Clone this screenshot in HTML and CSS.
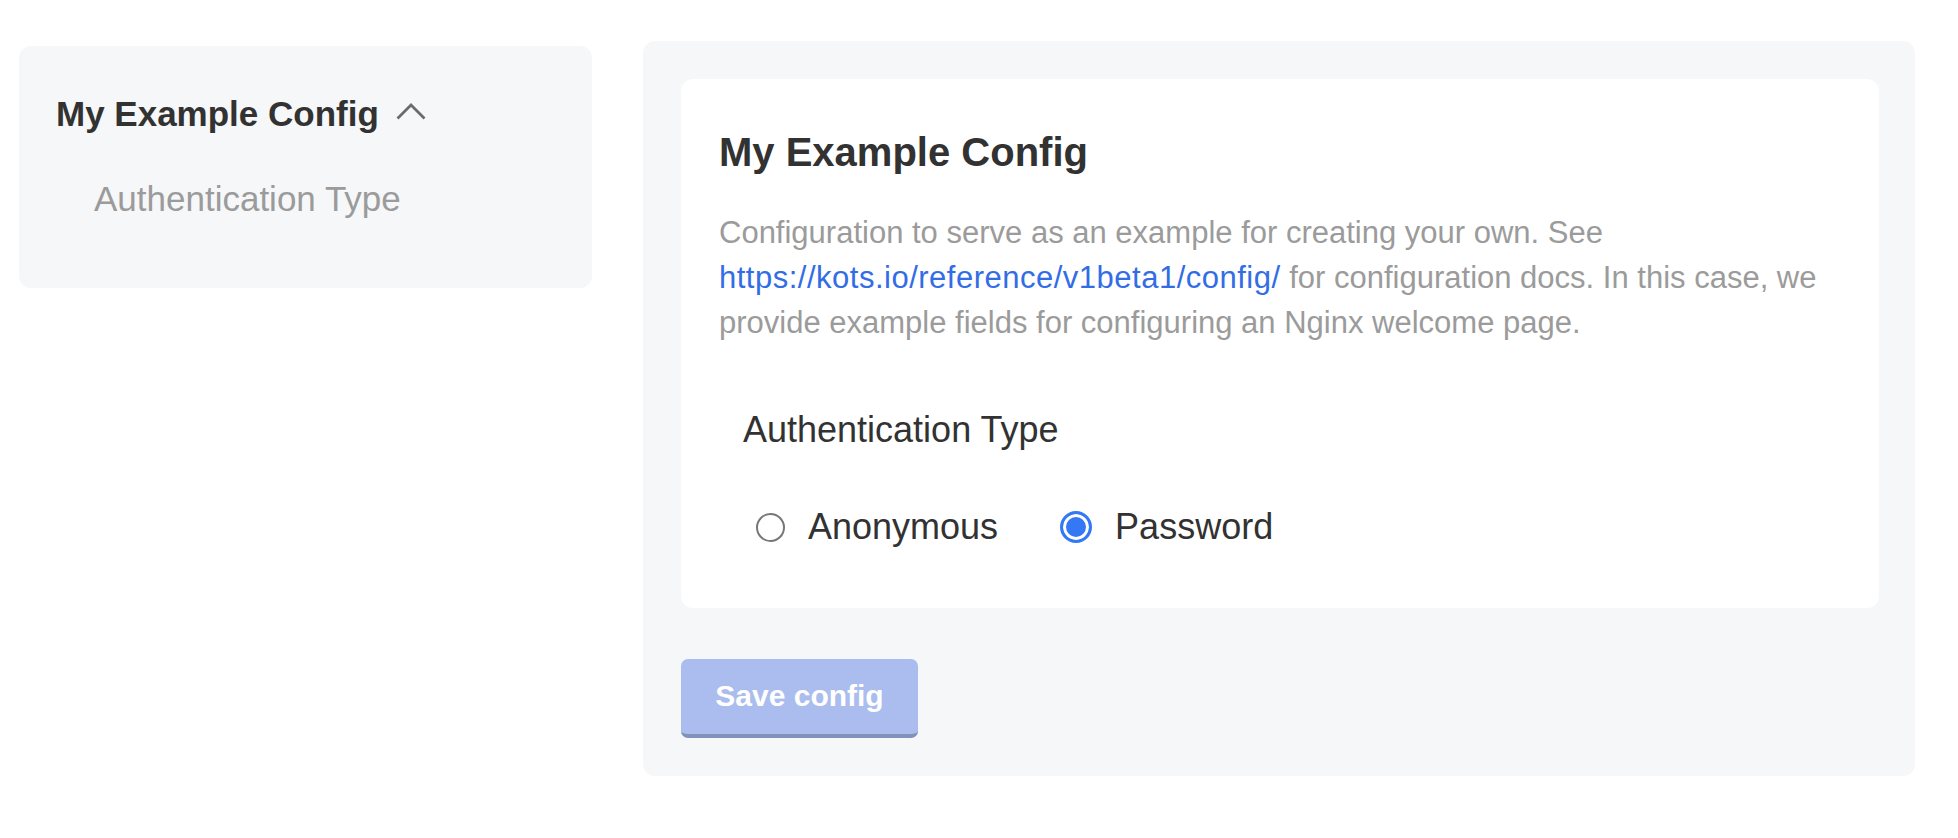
FILE: index.html
```html
<!DOCTYPE html>
<html lang="en">
<head>
<meta charset="utf-8">
<title>Config</title>
<link rel="stylesheet" href="styles.css">
</head>
<body>
<div class="page">
  <aside class="sidebar">
    <div class="side-group">
      <span class="side-title">My Example Config</span>
      <svg class="chevron" width="30" height="17" viewBox="0 0 30 17"><path d="M1.5 15.5 L15 2 L28.5 15.5" fill="none" stroke="#6b6b6b" stroke-width="2.8"/></svg>
    </div>
    <div class="side-item">Authentication Type</div>
  </aside>
  <main class="main">
    <section class="card">
      <h1 class="card-title">My Example Config</h1>
      <p class="desc">Configuration to serve as an example for creating your own. See <a class="link" href="#">https://kots.io/reference/v1beta1/config/</a> for configuration docs. In this case, we provide example fields for configuring an Nginx welcome page.</p>
      <div class="field">
        <div class="field-label">Authentication Type</div>
        <div class="radios">
          <label class="radio-opt"><span class="radio"></span><span>Anonymous</span></label>
          <label class="radio-opt"><span class="radio checked"></span><span>Password</span></label>
        </div>
      </div>
    </section>
    <div class="actions">
      <button class="btn">Save config</button>
    </div>
  </main>
</div>
</body>
</html>
```

FILE: styles.css
```css
html, body {
  margin: 0;
  padding: 0;
  background: #ffffff;
}
body {
  font-family: "Liberation Sans", Arial, Helvetica, sans-serif;
  color: #323232;
}
.page {
  display: flex;
  align-items: flex-start;
  gap: 51px;
  padding: 41px 43px 0 19px;
}
.sidebar {
  width: 573px;
  box-sizing: border-box;
  margin-top: 5px;
  background: #f6f7f9;
  border-radius: 12px;
  padding: 48px 0 69px 37px;
}
.side-group {
  display: flex;
  align-items: center;
  gap: 17px;
  height: 40px;
}
.side-title {
  font-weight: 700;
  font-size: 35px;
  line-height: 40px;
  color: #323232;
}
.chevron {
  display: block;
  margin-top: -6px;
}
.side-item {
  margin-top: 45px;
  padding-left: 38px;
  font-size: 35px;
  line-height: 40px;
  color: #9b9b9b;
}
.main {
  width: 1272px;
  box-sizing: border-box;
  background: #f6f7f9;
  border-radius: 12px;
  padding: 38px 36px 38px 38px;
}
.card {
  background: #ffffff;
  border-radius: 12px;
  padding: 49px 38px 61px 38px;
}
.card-title {
  margin: 0;
  font-size: 40px;
  line-height: 48px;
  font-weight: 700;
  color: #323232;
}
.desc {
  margin: 34px 0 0 0;
  font-size: 31px;
  line-height: 45px;
  color: #9b9b9b;
}
.link {
  color: #326de6;
  text-decoration: none;
  letter-spacing: 0.5px;
}
.field {
  margin-top: 64px;
  padding-left: 24px;
}
.field-label {
  font-size: 36px;
  line-height: 42px;
  color: #323232;
}
.radios {
  display: flex;
  align-items: center;
  gap: 62px;
  margin-top: 56px;
  padding-left: 13px;
  height: 40px;
}
.radio-opt {
  display: flex;
  align-items: center;
  gap: 23px;
  font-size: 36px;
  line-height: 40px;
  color: #323232;
}
.radio {
  display: block;
  width: 29px;
  height: 29px;
  box-sizing: border-box;
  border: 2px solid #777777;
  border-radius: 50%;
  background: #ffffff;
}
.radio.checked {
  width: 32px;
  height: 32px;
  border: 3px solid #3478f6;
  background: #3478f6;
  box-shadow: inset 0 0 0 3px #ffffff;
}
.actions {
  margin-top: 51px;
  display: flex;
}
.btn {
  font-family: "Liberation Sans", Arial, Helvetica, sans-serif;
  width: 237px;
  height: 79px;
  box-sizing: border-box;
  border: none;
  border-bottom: 4px solid #8291b9;
  border-radius: 7px;
  background: #aabdee;
  color: #ffffff;
  font-size: 30px;
  font-weight: 700;
  padding: 0 0 2px 0;
}
```
